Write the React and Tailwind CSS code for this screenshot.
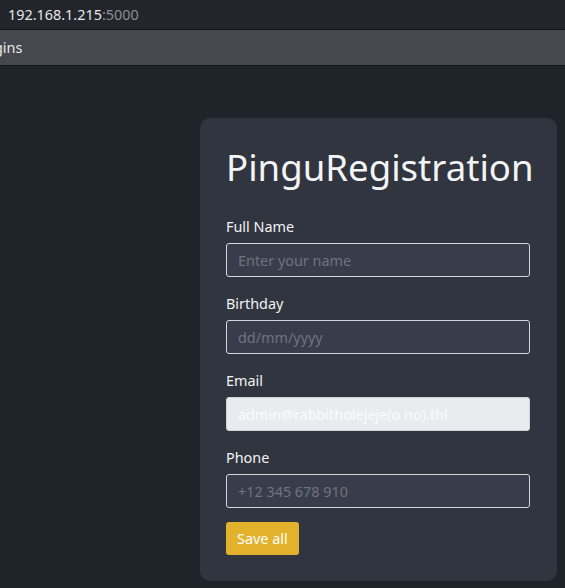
export default function App() {
  const fields = [
    { label: "Full Name", placeholder: "Enter your name" },
    { label: "Birthday", placeholder: "dd/mm/yyyy" },
    { label: "Email", value: "admin@rabbitholejeje(o no).thl", disabled: true },
    { label: "Phone", placeholder: "+12 345 678 910" },
  ];

  return (
    <div className="h-[588px] w-[565px] overflow-hidden bg-[#1f242b] font-['Noto_Sans',sans-serif] text-[#f1f3f5]">
      <div className="flex h-[30px] items-center border-b border-[#111318] bg-[#23252d] pl-2 text-[14.4px]">
        <span className="text-[#e6e6e6]">192.168.1.215</span>
        <span className="text-[#8b8d92]">:5000</span>
      </div>
      <div className="flex h-[36px] items-center border-b border-[#15171c] bg-[#45484f] text-[14.4px] text-[#e8e8e8]">
        <span className="-ml-[6px]">gins</span>
      </div>

      <div className="flex pl-[200px] pt-[52px]">
        <div className="w-[357px] rounded-[10px] bg-[#313540] px-[26px] pb-[26px] pt-[26px]">
          <h1 className="mb-[26px] text-[36.6px] leading-[46px] text-[#f3f4f6]">PinguRegistration</h1>
          {fields.map((f, i) => (
            <div key={f.label} className={i === fields.length - 1 ? "mb-[14px]" : "mb-[16px]"}>
              <label className="mb-[6px] block text-[14.4px] leading-[21px] text-[#f1f3f5]">{f.label}</label>
              <input
                disabled={f.disabled}
                defaultValue={f.value}
                placeholder={f.placeholder}
                className={
                  f.disabled
                    ? "block h-[34px] w-[304px] rounded-[3px] border border-[#ced4da] bg-[#e9ecef] px-[11px] text-[14.4px] text-[#fafbfc] outline-none"
                    : "block h-[34px] w-[304px] rounded-[3px] border border-[#d5d7dc] bg-[#393d4b] px-[11px] text-[14.4px] text-white outline-none placeholder:text-[#6f7380]"
                }
              />
            </div>
          ))}
          <button className="h-[33px] rounded-[3px] bg-[#e2b22d] px-[11px] text-[14.4px] text-white">Save all</button>
        </div>
      </div>
    </div>
  );
}
